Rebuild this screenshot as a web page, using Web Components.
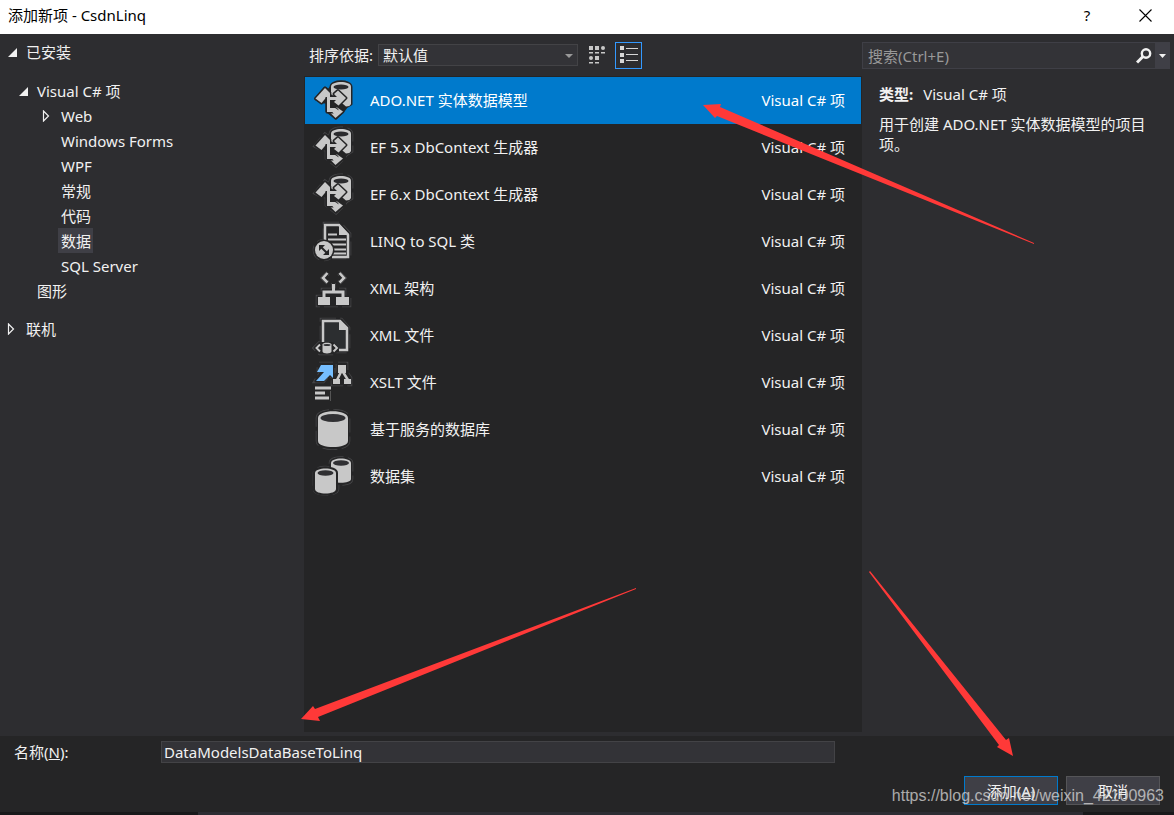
<!DOCTYPE html>
<html lang="zh-CN">
<head>
<meta charset="utf-8">
<title>添加新项 - CsdnLinq</title>
<style>
  html, body { margin: 0; }
  body { font: 15px/20px "Noto Sans", "Noto Sans CJK SC", sans-serif; color: #f1f1f1; background: #2d2d30; }
</style>
</head>
<body>
<new-item-dialog></new-item-dialog>

<template id="t-dialog">
  <style>
    :host { display: flex; flex-direction: column; min-height: 100vh; position: relative; overflow: hidden; }
    main { flex: 1; display: grid; grid-template-columns: 304px minmax(0, 1fr) 312px; }
    .center { display: flex; flex-direction: column; }
    .list { flex: 1; margin: 0 0 4px; padding: 1px; background: #252526; }
    .mark { position: absolute; right: 10px; bottom: 8px; font: 16px/22px "Liberation Sans", sans-serif; color: rgba(225,225,225,.72); pointer-events: none; }
    .a1 { right: 140px; top: 103px; }
    .a2 { left: 301px; bottom: 93px; }
    .a3 { right: 160px; bottom: 58px; }
  </style>
  <title-bar>添加新项 - CsdnLinq</title-bar>
  <main>
    <category-tree></category-tree>
    <section class="center">
      <sort-bar></sort-bar>
      <div class="list">
        <template-row icon="ado" selected>ADO.NET 实体数据模型</template-row>
        <template-row icon="ado">EF 5.x DbContext 生成器</template-row>
        <template-row icon="ado">EF 6.x DbContext 生成器</template-row>
        <template-row icon="linq">LINQ to SQL 类</template-row>
        <template-row icon="schema">XML 架构</template-row>
        <template-row icon="xml">XML 文件</template-row>
        <template-row icon="xslt">XSLT 文件</template-row>
        <template-row icon="db">基于服务的数据库</template-row>
        <template-row icon="dataset">数据集</template-row>
      </div>
    </section>
    <detail-pane>
      <span slot="type">Visual C# 项</span>
      用于创建 ADO.NET 实体数据模型的项目项。
    </detail-pane>
  </main>
  <dialog-footer></dialog-footer>
  <pointer-arrow class="a1" w="331" h="141" points="0,2 18,1 17,4 331,140 331,141 14,13 12,15"></pointer-arrow>
  <pointer-arrow class="a2" w="335" h="134" points="0,131 12,118 14,121 335,0 335,1 17,129 19,133"></pointer-arrow>
  <pointer-arrow class="a3" w="145" h="186" points="144,185 140,167 137,169 1,0 0,1 130,174 128,176"></pointer-arrow>
  <div class="mark">https://blog.csdn.net/weixin_42100963</div>
</template>

<template id="t-title">
  <style>
    :host { display: flex; align-items: center; height: 34px; background: #fff; color: #000; padding: 0 12px 0 8px; }
    .title { flex: 1; padding-bottom: 4px; }
    button { width: 34px; height: 24px; margin: 0 0 4px; padding: 0; border: 0; background: none; color: #000; font: inherit; display: grid; place-items: center; }
    .close { margin-left: 24px; }
  </style>
  <span class="title"><slot></slot></span>
  <button aria-label="帮助">?</button>
  <button class="close" aria-label="关闭"><svg width="13" height="13" viewBox="0 0 13 13"><path d="M.5.5l12 12M12.5.5l-12 12" stroke="#000" stroke-width="1.1"/></svg></button>
</template>

<template id="t-tree">
  <style>
    :host { display: block; padding-top: 5px; }
    nav { display: flex; flex-direction: column; }
    .online { margin-top: 13px; }
    .group { margin-top: 14px; }
  </style>
  <nav>
    <tree-node arrow="open" level="0">已安装</tree-node>
    <tree-node class="group" arrow="open" level="1">Visual C# 项</tree-node>
    <tree-node arrow="closed" level="2">Web</tree-node>
    <tree-node level="2">Windows Forms</tree-node>
    <tree-node level="2">WPF</tree-node>
    <tree-node level="2">常规</tree-node>
    <tree-node level="2">代码</tree-node>
    <tree-node level="2" selected>数据</tree-node>
    <tree-node level="2">SQL Server</tree-node>
    <tree-node level="1">图形</tree-node>
    <tree-node class="online" arrow="closed" level="0">联机</tree-node>
  </nav>
</template>

<template id="t-node">
  <style>
    :host { display: flex; height: 25px; }
    :host([level="0"]) { padding-left: 7px; }
    :host([level="1"]) { padding-left: 18px; }
    :host([level="2"]) { padding-left: 42px; }
    svg { display: none; width: 12px; height: 12px; }
    .mark { width: 16px; display: flex; align-items: center; }
    :host([arrow="open"]) .open, :host([arrow="closed"]) .closed { display: block; }
    button { border: 0; background: none; color: inherit; font: inherit; padding: 0 2px 0 3px; height: 25px; }
    :host([selected]) button { background: #3f3f46; }
  </style>
  <span class="mark">
    <svg class="open" viewBox="0 0 12 12"><path d="M10 2v9H1z" fill="#f1f1f1"/></svg>
    <svg class="closed" viewBox="0 0 12 12"><path d="M1.500 1v10l5-5z" fill="none" stroke="#f1f1f1" stroke-width="1.200"/></svg>
  </span>
  <button><slot></slot></button>
</template>

<template id="t-sort">
  <style>
    :host { display: flex; align-items: center; height: 42px; padding-left: 5px; box-sizing: border-box; }
    label { width: 69px; white-space: nowrap; }
    .pick { position: relative; width: 200px; height: 22px; }
    select { appearance: none; box-sizing: border-box; width: 100%; height: 22px; border: 1px solid #434346; border-radius: 0; background: #333337; color: inherit; font: inherit; padding: 0 4px; line-height: 18px; }
    .pick svg { position: absolute; right: 5px; top: 10px; pointer-events: none; }
    button { box-sizing: border-box; width: 27px; height: 27px; border: 1px solid transparent; background: none; padding: 0; display: grid; place-items: center; margin-left: 5px; }
    button.on { border-color: #3399ff; }
  </style>
  <label for="sort">排序依据:</label>
  <span class="pick">
    <select id="sort"><option>默认值</option></select>
    <svg width="8" height="4" viewBox="0 0 8 4"><path d="M0 0h8L4 4z" fill="#999"/></svg>
  </span>
  <button aria-label="中等图标"><svg width="18" height="18" viewBox="0 0 18 18" fill="#c8c8c8"><path d="M1 0h4v4H1zM7 0h4v4H7zM7 10h4v4H7zM1 6h4v1.500H1zM7 6h4v1.500H7zM13 6h4v1.500h-4zM1 16h4v1.500H1zM7 16h4v1.500H7z"/><circle cx="15" cy="2" r="2"/><circle cx="3" cy="12" r="2"/></svg></button>
  <button class="on" aria-label="小图标"><svg width="18" height="18" viewBox="0 0 18 18" fill="#d6d6d6"><path d="M0 0h4v4H0zM0 7h4v4H0zM0 13h4v4H0zM6 2h12v1H6zM6 8h12v1H6zM6 14h12v1H6z"/></svg></button>
</template>

<template id="t-row">
  <style>
    :host { display: block; }
    button { display: flex; align-items: center; box-sizing: border-box; width: 100%; height: 47px; padding: 0 16px 0 8px; border: 0; background: none; color: inherit; font: inherit; text-align: left; }
    :host([selected]) button { background: #007acc; color: #fff; }
    span { padding-bottom: 2px; }
    .name { flex: 1; margin-left: 17px; }
  </style>
  <button><item-icon></item-icon><span class="name"><slot></slot></span><span>Visual C# 项</span></button>
</template>

<template id="t-detail">
  <style>
    :host { display: block; padding: 8px 4px 0 0; }
    .search { display: flex; box-sizing: border-box; height: 27px; border: 1px solid #3f3f46; background: #333337; }
    input { flex: 1; min-width: 0; border: 0; padding: 0 0 0 5px; background: none; color: inherit; font: inherit; outline: 0; }
    input::placeholder { color: #999; opacity: 1; }
    button { border: 0; padding: 0; background: none; width: 22px; display: grid; place-items: center; }
    .more { width: 14px; background: #3f3f46; }
    dl { margin: 15px 10px 0 17px; display: flex; }
    dt { font-weight: 700; margin-right: 10px; }
    dd { margin: 0; }
    p { margin: 10px 18px 0 17px; }
  </style>
  <div class="search">
    <input type="text" placeholder="搜索(Ctrl+E)" aria-label="搜索">
    <button aria-label="搜索"><svg width="16" height="16" viewBox="0 0 16 16" fill="none" stroke="#f1f1f1"><circle cx="10" cy="5.500" r="4.200" stroke-width="2.400"/><path d="M7 8.500L1 14.500" stroke-width="3"/></svg></button>
    <button class="more" aria-label="搜索选项"><svg width="7" height="4" viewBox="0 0 7 4"><path d="M0 0h7L3.500 4z" fill="#f1f1f1"/></svg></button>
  </div>
  <dl><dt>类型:</dt><dd><slot name="type"></slot></dd></dl>
  <p><slot></slot></p>
</template>

<template id="t-footer">
  <style>
    :host { display: block; background: #252526; }
    .name { display: grid; grid-template-columns: 147px minmax(0, 1fr); align-items: center; padding: 5px 339px 0 14px; }
    input { box-sizing: border-box; width: 100%; height: 22px; border: 1px solid #434346; background: #333337; color: inherit; font: inherit; padding: 0 2px; outline: 0; }
    .actions { display: flex; justify-content: flex-end; gap: 8px; padding: 13px 14px 7px; }
    button { box-sizing: border-box; width: 94px; height: 29px; border: 1px solid #555558; background: #3f3f46; color: inherit; font: inherit; padding: 0; }
    button.main { border-color: #007acc; }
    .edge { height: 3px; background: linear-gradient(90deg, #19191b 198px, #2d2d33 198px calc(100% - 91px), #19191b calc(100% - 91px)); }
  </style>
  <div class="name"><label for="n">名称(<u>N</u>):</label><input id="n" type="text" value="DataModelsDataBaseToLinq"></div>
  <div class="actions"><button class="main">添加(<u>A</u>)</button><button>取消</button></div>
  <div class="edge"></div>
</template>

<script>
  const define = (name, templateId, setup) => customElements.define(name, class extends HTMLElement {
    constructor() {
      super();
      this.attachShadow({ mode: "open" }).append(document.getElementById(templateId).content.cloneNode(true));
    }
    connectedCallback() { if (setup) setup(this, this.shadowRoot); }
  });

  const icons = {
    ado: {
      shape: '<path d="M18 7C18 0 38 0 38 7v17l-5 3-3 4-7 7-9-7V22H9L3 19 12 8l4 3z"/>',
      art: `<path d="M18 6.500c0-6 20-6 20 0V24q-1 2.500-5 2.500L18 14z" fill="#c8c8c8"/><ellipse cx="28" cy="7" rx="7.500" ry="2.600" fill="#2b2b2e"/>
        <g fill="#c8c8c8" stroke="#252526" stroke-width="3" paint-order="stroke" stroke-linejoin="round">
        <path d="M23.500 27l6.500 4.500-7.500 6.500-5-5z"/>
        <path d="M2.500 18.500L12 8l5 5-8.500 10z"/>
        <path d="M14 17h10l-3-3 4-3.500 8 7.500-7.500 7.500L21 22l2-2h-6v8h5l2 2-2 2H14z"/></g>
        <path d="M11 14l6-1v4h-5z" fill="#c8c8c8"/><path d="M17 28.500h6l4 3-5 4-3-4z" fill="#c8c8c8"/>`
    },
    linq: {
      shape: '<path d="M12 3h15l9 10v23H12z"/><circle cx="11" cy="29" r="9"/>',
      art: '<path d="M12 20V4h14l9 10v22H19" fill="none" stroke="#c8c8c8" stroke-width="2.500"/><path d="M26 3l10 10v1H26z" fill="#c8c8c8"/><path d="M15 13.500h9M15 18.500h18M18 23.500h15M21 28.500h12M20 32.500h13" stroke="#c8c8c8" stroke-width="2.200"/><circle cx="11" cy="29" r="10.500" fill="#252526"/><circle cx="11" cy="29" r="9" fill="#c8c8c8"/><path d="M8 26l6 6" stroke="#252526" stroke-width="2"/><path d="M6 24h6l-6 6zM16 34h-6l6-6z" fill="#252526"/>'
    },
    schema: {
      shape: '<path d="M15 5l-5 5 5 5M26 5l5 5-5 5M20.500 15v8M5 37V29h5v-7h21v7h5v8z"/>',
      art: '<path d="M14.500 5l-4.500 5 4.500 4.500M26.500 5l4.500 5-4.500 4.500" fill="none" stroke="#c8c8c8" stroke-width="2.600"/><path d="M20.500 16v7M11 30v-6h19v6" fill="none" stroke="#c8c8c8" stroke-width="3"/><path d="M5 29h12v8H5zM23 29h13v8H23z" fill="#c8c8c8"/>'
    },
    xml: {
      shape: '<path d="M9 5h19l7 8v23H9z"/><path d="M2 33l5-5h14l5 5-5 5H7z"/>',
      art: '<path d="M10 27V6h17l7 7v22H26" fill="#2c2e30" stroke="#c8c8c8" stroke-width="2.500"/><path d="M26 5l9 9v1h-9z" fill="#c8c8c8"/><path d="M2 33l6-6h12l6 6-6 6H8z" fill="#252526"/><path d="M7 29.500L3.500 33 7 36.500M20.500 29.500L24 33l-3.500 3.500" fill="none" stroke="#c8c8c8" stroke-width="1.900"/><path d="M9.500 29.500c0-2.500 9-2.500 9 0v7c0 2.500-9 2.500-9 0z" fill="#c8c8c8"/><ellipse cx="14" cy="30" rx="3.500" ry="1" fill="#303033"/>'
    },
    xslt: {
      shape: '<path d="M6 2h14v13l-4-3-6 7H3l7-11H6zM25 2h8v8l4 6v6H20v-6l5-6z"/>',
      art: '<path d="M8 3h12v13l-3-3-6 6H3l8-9H4z" fill="#75beff"/><path d="M25 3h8v8h-8zM20 17h7v5h-7zM31 17h7v5h-7z" fill="#c8c8c8"/><path d="M28 10l-4 8M30 10l5 8" stroke="#c8c8c8" stroke-width="2.500"/><path d="M2 26h16M2 31h10M2 36h14" stroke="#c8c8c8" stroke-width="2.800"/><path d="M17.500 29v10" stroke="#555"/>'
    },
    db: {
      shape: '<path d="M5 9c0-9 30-9 30 0v23c0 9-30 9-30 0z"/>',
      art: '<path d="M5 9c0-9 30-9 30 0v23c0 8-30 8-30 0z" fill="#c8c8c8"/><ellipse cx="20" cy="9" rx="12.500" ry="4" fill="#303033"/>'
    },
    dataset: {
      shape: '<path d="M18 7c0-6 20-6 20 0v16c0 4-8 5-14 4v6c0 6-22 6-22 0V17c0-4 9-6 16-4z"/>',
      art: '<path d="M18 7c0-6 20-6 20 0v16c0 5-20 5-20 0z" fill="#c8c8c8"/><ellipse cx="28" cy="7" rx="8" ry="2.800" fill="#303033"/><path d="M2 17c0-6 21-6 21 0v16c0 6-21 6-21 0z" fill="#c8c8c8" stroke="#252526" stroke-width="4" paint-order="stroke"/><ellipse cx="12.500" cy="17" rx="8" ry="2.800" fill="#303033"/>'
    }
  };

  customElements.define("item-icon", class extends HTMLElement {
    constructor() { super(); this.attachShadow({ mode: "open" }); }
    draw(name, selected) {
      const { shape, art } = icons[name];
      const rim = selected ? "" : `<g fill="none" stroke="#444446" stroke-width="4.600" stroke-dasharray="14 4">${shape}</g>`;
      this.shadowRoot.innerHTML = `<style>:host{display:block;width:40px;height:41px}svg{display:block;overflow:visible}</style>
        <svg width="40" height="41" viewBox="0 0 40 41" aria-hidden="true">${rim}<g fill="#252526" stroke="#252526" stroke-width="3" stroke-linejoin="round">${shape}</g>${art}</svg>`;
    }
  });

  customElements.define("pointer-arrow", class extends HTMLElement {
    constructor() { super(); this.attachShadow({ mode: "open" }); }
    connectedCallback() {
      const w = this.getAttribute("w"), h = this.getAttribute("h");
      this.shadowRoot.innerHTML = `<style>:host{position:absolute;pointer-events:none}svg{display:block}</style>
        <svg width="${w}" height="${h}" viewBox="0 0 ${w} ${h}"><polygon points="${this.getAttribute("points")}" fill="#ff3938"/></svg>`;
    }
  });

  define("title-bar", "t-title");
  define("tree-node", "t-node");
  define("category-tree", "t-tree");
  define("sort-bar", "t-sort");
  define("template-row", "t-row", (host, root) =>
    root.querySelector("item-icon").draw(host.getAttribute("icon"), host.hasAttribute("selected")));
  define("detail-pane", "t-detail");
  define("dialog-footer", "t-footer");
  define("new-item-dialog", "t-dialog");
</script>
</body>
</html>
